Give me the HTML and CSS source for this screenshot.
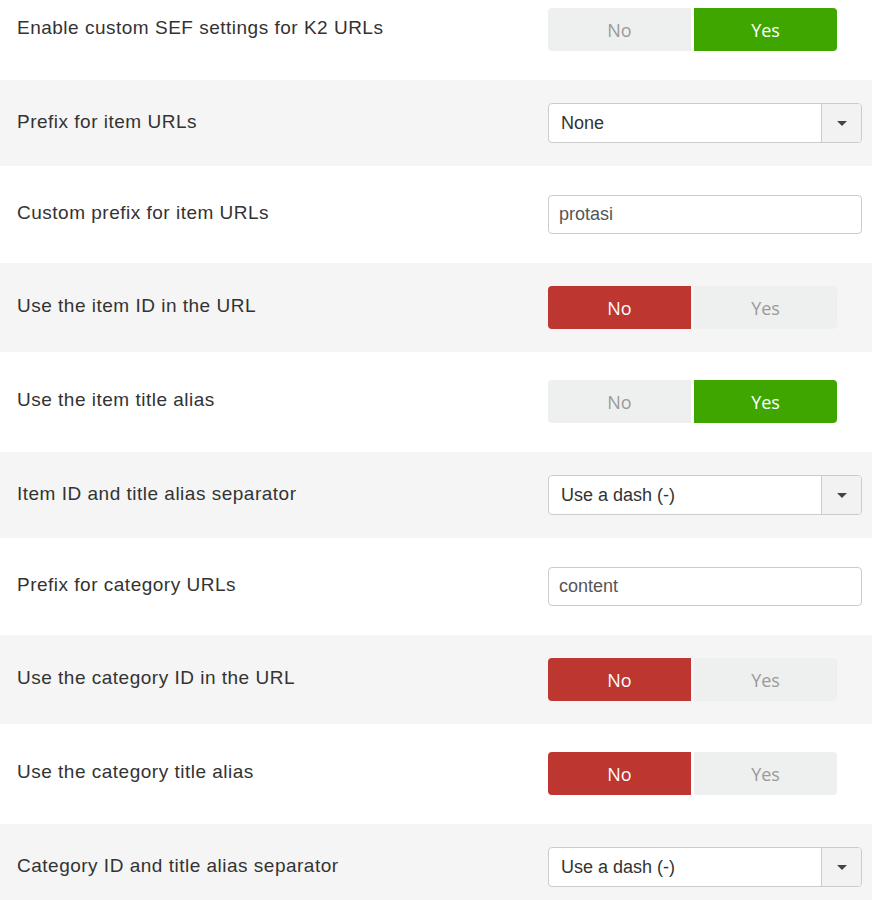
FILE: index.html
```html
<!DOCTYPE html>
<html lang="en">
<head>
    <meta charset="UTF-8">
    <title>K2 SEF settings</title>
    <link rel="stylesheet" href="styles.css">
</head>
<body>

<div class="settings">
    <div class="row row-first">
        <label class="label">Enable custom SEF settings for K2 URLs</label>
        <div class="toggle">
            <span class="opt">No</span>
            <span class="opt opt-yes">Yes</span>
        </div>
    </div>

    <div class="row row-select alt">
        <label class="label">Prefix for item URLs</label>
        <div class="select">
            <span class="select-value">None</span>
            <span class="select-btn"><i class="caret"></i></span>
        </div>
    </div>

    <div class="row row-input">
        <label class="label">Custom prefix for item URLs</label>
        <input class="text" type="text" value="protasi">
    </div>

    <div class="row row-toggle alt">
        <label class="label">Use the item ID in the URL</label>
        <div class="toggle">
            <span class="opt opt-no">No</span>
            <span class="opt">Yes</span>
        </div>
    </div>

    <div class="row row-toggle-lg">
        <label class="label">Use the item title alias</label>
        <div class="toggle">
            <span class="opt">No</span>
            <span class="opt opt-yes">Yes</span>
        </div>
    </div>

    <div class="row row-select alt">
        <label class="label">Item ID and title alias separator</label>
        <div class="select">
            <span class="select-value">Use a dash (-)</span>
            <span class="select-btn"><i class="caret"></i></span>
        </div>
    </div>

    <div class="row row-input">
        <label class="label">Prefix for category URLs</label>
        <input class="text" type="text" value="content">
    </div>

    <div class="row row-toggle alt">
        <label class="label">Use the category ID in the URL</label>
        <div class="toggle">
            <span class="opt opt-no">No</span>
            <span class="opt">Yes</span>
        </div>
    </div>

    <div class="row row-toggle-lg">
        <label class="label">Use the category title alias</label>
        <div class="toggle">
            <span class="opt opt-no">No</span>
            <span class="opt">Yes</span>
        </div>
    </div>

    <div class="row row-select alt">
        <label class="label">Category ID and title alias separator</label>
        <div class="select">
            <span class="select-value">Use a dash (-)</span>
            <span class="select-btn"><i class="caret"></i></span>
        </div>
    </div>
</div>

</body>
</html>
```

FILE: styles.css
```css
* {
    margin: 0;
    padding: 0;
    box-sizing: border-box;
}

body {
    background-color: #fff;
    font-family: "Liberation Sans", Arial, sans-serif;
    color: #333;
}

.row {
    display: flex;
    align-items: center;
    padding-left: 17px;
}

.alt {
    background-color: #f5f5f5;
}

.row-first {
    padding-top: 8px;
    padding-bottom: 29px;
}

.row-toggle {
    padding-top: 23px;
    padding-bottom: 23px;
}

.row-toggle-lg {
    padding-top: 28px;
    padding-bottom: 29px;
}

.row-select {
    padding-top: 23px;
    padding-bottom: 23px;
}

.row-input {
    padding-top: 29px;
    padding-bottom: 29px;
}

.label {
    width: 531px;
    font-size: 19px;
    letter-spacing: 0.5px;
    line-height: 20px;
    margin-top: -3px;
    color: #333;
}

/* 开关按钮 */
.toggle {
    display: flex;
    gap: 3px;
    width: 289px;
    height: 43px;
}

.opt {
    flex: 1;
    display: flex;
    align-items: center;
    justify-content: center;
    background-color: #eef0f0;
    color: #9a9a9a;
    font-family: "Open Sans", sans-serif;
    font-size: 18px;
}

.opt:first-child {
    border-radius: 4px 0 0 4px;
}

.opt:last-child {
    border-radius: 0 4px 4px 0;
}

.opt-yes {
    background-color: #3fa600;
    color: #fff;
}

.opt-no {
    background-color: #bd362f;
    color: #fff;
}

/* 下拉框 */
.select {
    display: flex;
    width: 314px;
    height: 40px;
    border: 1px solid #ccc;
    border-radius: 4px;
    background-color: #fff;
    overflow: hidden;
}

.select-value {
    flex: 1;
    display: flex;
    align-items: center;
    padding-left: 12px;
    font-size: 18px;
    color: #333;
}

.select-btn {
    width: 40px;
    display: flex;
    align-items: center;
    justify-content: center;
    border-left: 1px solid #ccc;
    background-color: #f2f2f2;
}

.caret {
    width: 0;
    height: 0;
    border-left: 5px solid transparent;
    border-right: 5px solid transparent;
    border-top: 5px solid #444;
}

/* 输入框 */
.text {
    width: 314px;
    height: 39px;
    border: 1px solid #ccc;
    border-radius: 4px;
    padding-left: 10px;
    font-family: "Liberation Sans", Arial, sans-serif;
    font-size: 18px;
    color: #555;
    outline: none;
}
```
